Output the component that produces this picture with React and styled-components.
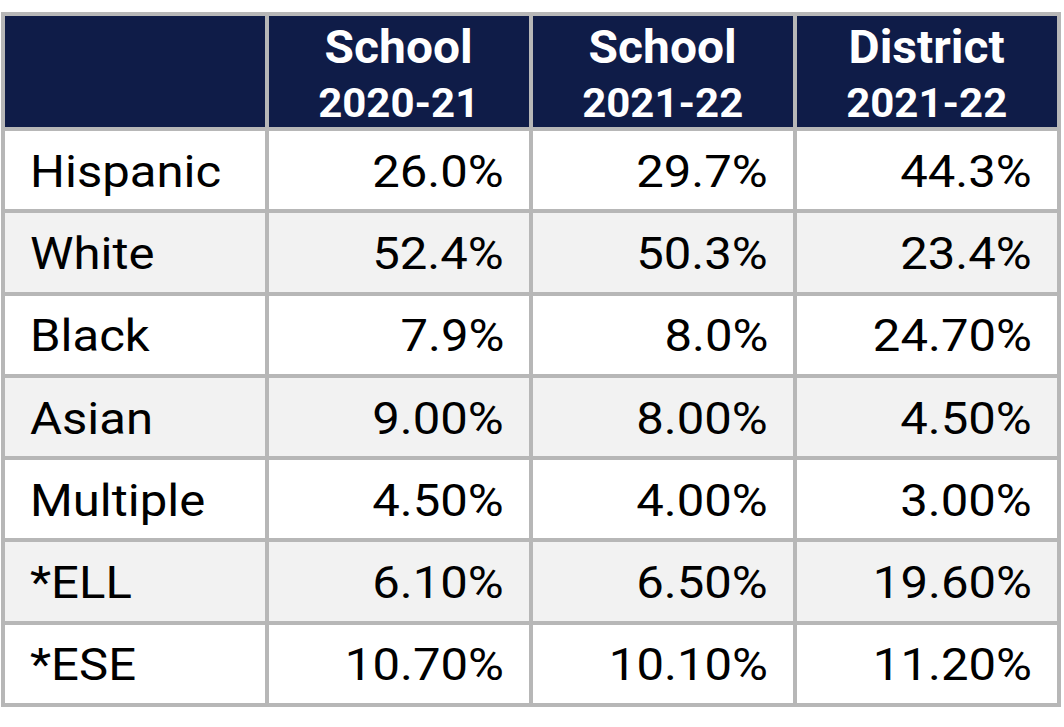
import React from "react";
import styled, { createGlobalStyle } from "styled-components";

const Global = createGlobalStyle`
  html, body { margin: 0; padding: 0; background: #ffffff; }
  body { font-family: Roboto, "Liberation Sans", sans-serif; }
`;

const Page = styled.div`
  padding: 12px 0 0 1px;
`;

const Table = styled.div`
  width: 1060px;
  display: grid;
  grid-template-columns: repeat(4, 1fr);
  grid-template-rows: 111px repeat(7, 78.3px);
  gap: 4px;
  padding: 4px;
  box-sizing: border-box;
  background: #b7b7b7;
`;

const HeadCell = styled.div`
  background: #0f1c48;
  color: #ffffff;
  display: flex;
  flex-direction: column;
  align-items: center;
  justify-content: flex-start;
  padding-top: 6px;
  font-weight: 700;
`;

const HeadTitle = styled.span`
  font-size: 47px;
  line-height: 50px;
  display: inline-block;
  transform: scaleX(1.02);
`;

const HeadYear = styled.span`
  font-size: 40px;
  line-height: 46px;
  margin-top: 9px;
  display: inline-block;
  transform: scaleX(1.05);
`;

const Cell = styled.div`
  background: ${(p) => (p.$shade ? "#f2f2f2" : "#ffffff")};
  display: flex;
  align-items: center;
  justify-content: ${(p) => (p.$num ? "flex-end" : "flex-start")};
  padding: 3px ${(p) => (p.$num ? "25px" : "0")} 0 ${(p) => (p.$num ? "0" : "25px")};
  color: #000000;
`;

const CellText = styled.span`
  font-size: 45px;
  line-height: 50px;
  display: inline-block;
  transform: scaleX(1.09);
  transform-origin: ${(p) => (p.$num ? "right center" : "left center")};
`;

const headers = [
  ["School", "2020-21"],
  ["School", "2021-22"],
  ["District", "2021-22"],
];

const rows = [
  ["Hispanic", "26.0%", "29.7%", "44.3%"],
  ["White", "52.4%", "50.3%", "23.4%"],
  ["Black", "7.9%", "8.0%", "24.70%"],
  ["Asian", "9.00%", "8.00%", "4.50%"],
  ["Multiple", "4.50%", "4.00%", "3.00%"],
  ["*ELL", "6.10%", "6.50%", "19.60%"],
  ["*ESE", "10.70%", "10.10%", "11.20%"],
];

export default function App() {
  return (
    <Page>
      <Global />
      <Table>
        <HeadCell />
        {headers.map(([t, y], i) => (
          <HeadCell key={i}>
            <HeadTitle>{t}</HeadTitle>
            <HeadYear>{y}</HeadYear>
          </HeadCell>
        ))}
        {rows.map((r, ri) =>
          r.map((v, ci) => (
            <Cell key={`${ri}-${ci}`} $shade={ri % 2 === 1} $num={ci > 0}>
              <CellText $num={ci > 0}>{v}</CellText>
            </Cell>
          ))
        )}
      </Table>
    </Page>
  );
}
